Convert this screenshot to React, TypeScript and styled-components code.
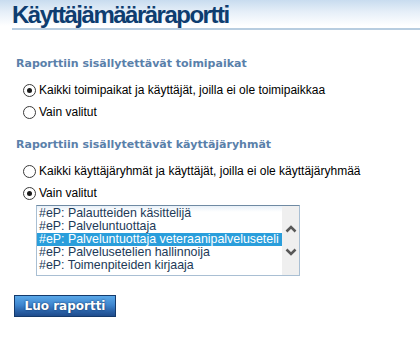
import React from "react";
import styled, { createGlobalStyle } from "styled-components";

const Global = createGlobalStyle`
  html, body { margin: 0; padding: 0; background: #fff; }
  body { font-family: "Liberation Sans", Arial, sans-serif; }
`;

const Page = styled.div`
  width: 420px;
  height: 363px;
  background: #fff;
`;

const Header = styled.div`
  background: linear-gradient(to bottom, #c8dcef 0px, #e6eff8 12px, #ffffff 26px);
  padding-left: 12px;
`;

const Title = styled.h1`
  margin: 0;
  height: 28px;
  font-family: "Liberation Sans", Arial, sans-serif;
  font-weight: bold;
  font-size: 24px;
  line-height: 30px;
  color: #0e3d70;
  letter-spacing: -1.5px;
  border-bottom: 2px solid #b8cde0;
  box-sizing: content-box;
`;

const Content = styled.div`
  padding: 27px 0 0 16px;
`;

const SectionTitle = styled.h2`
  margin: 0 0 8px 0;
  font-family: "DejaVu Sans", Verdana, sans-serif;
  font-weight: bold;
  font-size: 11px;
  line-height: 14px;
  color: #5a80aa;
`;

const Section = styled.div<{ $gap?: number }>`
  margin-bottom: ${(p) => p.$gap ?? 0}px;
`;

const RadioRow = styled.label`
  display: flex;
  align-items: center;
  height: 22px;
  padding-left: 7px;
  font-size: 12px;
  color: #000;
  gap: 3px;
`;

const Radio = styled.span<{ $checked?: boolean }>`
  position: relative;
  width: 11px;
  height: 11px;
  border-radius: 50%;
  border: 1px solid #3a3a3a;
  background: #fff;
  flex: none;
  &::after {
    content: "";
    display: ${(p) => (p.$checked ? "block" : "none")};
    position: absolute;
    left: 3px;
    top: 3px;
    width: 5px;
    height: 5px;
    border-radius: 50%;
    background: #1a1a1a;
  }
`;

const ListBox = styled.div`
  margin: 1px 0 0 20px;
  width: 262px;
  height: 69px;
  border: 1px solid #a9bfd3;
  border-top-color: #6f8aa3;
  display: flex;
  background: linear-gradient(to bottom, #e8f0f8 0px, #ffffff 6px);
  overflow: hidden;
`;

const Items = styled.div`
  flex: 1;
  padding-top: 1px;
`;

const Item = styled.div<{ $selected?: boolean }>`
  height: 13px;
  line-height: 13px;
  padding-left: 2px;
  font-size: 12.4px;
  white-space: nowrap;
  color: ${(p) => (p.$selected ? "#fff" : "#1d3a58")};
  background: ${(p) => (p.$selected ? "#2a9edb" : "transparent")};
`;

const ScrollBar = styled.div`
  width: 17px;
  flex: none;
  background: #efefef;
  display: flex;
  flex-direction: column;
  align-items: center;
  justify-content: center;
  gap: 15px;
`;

const Button = styled.button`
  margin: 19px 0 0 -2px;
  width: 102px;
  height: 22px;
  border: 1px solid #143a6c;
  background: linear-gradient(to bottom, #5aa8e8 0%, #3f86cf 45%, #2a62a8 75%, #1f4c8c 100%);
  color: #fff;
  font-family: "DejaVu Sans", Verdana, sans-serif;
  font-weight: bold;
  font-size: 12px;
  text-shadow: 0 0 2px #0d2a55;
  padding: 0;
  cursor: pointer;
`;

const Chevron = ({ up }: { up?: boolean }) => (
  <svg width="12" height="8" viewBox="0 0 12 8" style={{ display: "block", flex: "none" }}>
    <polyline
      points={up ? "1.5,6.5 6,2 10.5,6.5" : "1.5,1.5 6,6 10.5,1.5"}
      fill="none"
      stroke="#585858"
      strokeWidth="2.5"
    />
  </svg>
);

const items = [
  "#eP: Palautteiden käsittelijä",
  "#eP: Palveluntuottaja",
  "#eP: Palveluntuottaja veteraanipalveluseteli",
  "#eP: Palvelusetelien hallinnoija",
  "#eP: Toimenpiteiden kirjaaja",
];

export default function App() {
  return (
    <Page>
      <Global />
      <Header>
        <Title>Käyttäjämääräraportti</Title>
      </Header>
      <Content>
        <Section $gap={15}>
          <SectionTitle>Raporttiin sisällytettävät toimipaikat</SectionTitle>
          <RadioRow>
            <Radio $checked />
            Kaikki toimipaikat ja käyttäjät, joilla ei ole toimipaikkaa
          </RadioRow>
          <RadioRow>
            <Radio />
            Vain valitut
          </RadioRow>
        </Section>
        <Section>
          <SectionTitle>Raporttiin sisällytettävät käyttäjäryhmät</SectionTitle>
          <RadioRow>
            <Radio />
            Kaikki käyttäjäryhmät ja käyttäjät, joilla ei ole käyttäjäryhmää
          </RadioRow>
          <RadioRow>
            <Radio $checked />
            Vain valitut
          </RadioRow>
          <ListBox>
            <Items>
              {items.map((t, i) => (
                <Item key={t} $selected={i === 2}>
                  {t}
                </Item>
              ))}
            </Items>
            <ScrollBar>
              <Chevron up />
              <Chevron />
            </ScrollBar>
          </ListBox>
        </Section>
        <Button>Luo raportti</Button>
      </Content>
    </Page>
  );
}
